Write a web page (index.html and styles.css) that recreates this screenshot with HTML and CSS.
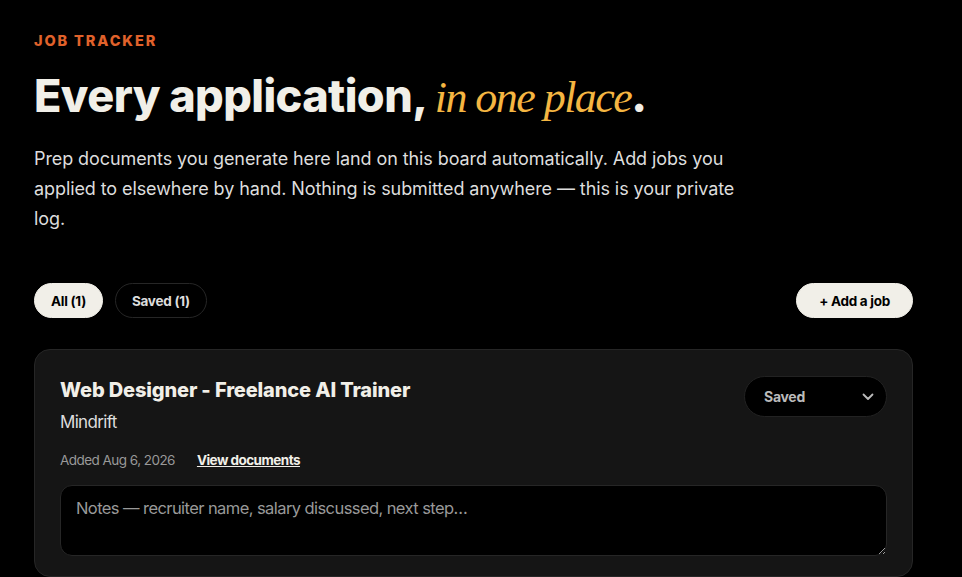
FILE: index.html
```html
<!DOCTYPE html>
<html lang="en">
<head>
  <meta charset="UTF-8">
  <meta name="viewport" content="width=device-width, initial-scale=1.0">
  <title>Job Tracker</title>
  <link rel="stylesheet" href="styles.css">
</head>
<body>

<div class="page">
  <p class="eyebrow">JOB TRACKER</p>
  <h1>Every application, <em>in one place</em>.</h1>
  <p class="intro">Prep documents you generate here land on this board automatically. Add jobs you applied to elsewhere by hand. Nothing is submitted anywhere — this is your private log.</p>

  <div class="toolbar">
    <div class="filters">
      <button class="pill active">All (1)</button>
      <button class="pill">Saved (1)</button>
    </div>
    <button class="add-btn">+ Add a job</button>
  </div>

  <div class="job-card">
    <div class="job-head">
      <div>
        <h2>Web Designer - Freelance AI Trainer</h2>
        <p class="company">Mindrift</p>
      </div>
      <div class="status">
        <span>Saved</span>
        <svg width="12" height="8" viewBox="0 0 12 8"><path d="M1.5 1.5 6 6l4.5-4.5" fill="none" stroke="#bbb" stroke-width="1.8" stroke-linecap="round" stroke-linejoin="round"/></svg>
      </div>
    </div>
    <div class="meta">
      <span class="added">Added Aug 6, 2026</span>
      <a href="#" class="docs">View documents</a>
    </div>
    <textarea class="notes" placeholder="Notes — recruiter name, salary discussed, next step…"></textarea>
  </div>
</div>

</body>
</html>
```

FILE: styles.css
```css
/* Base */
body {
  margin: 0;
  background: #000;
  color: #f1efe8;
  font-family: Inter, "Liberation Sans", sans-serif;
}
.page {
  max-width: 879px;
  padding: 32px 34px;
}
.eyebrow {
  margin: 0;
  color: #e0622b;
  font-size: 14.5px;
  font-weight: 800;
  letter-spacing: 0.13em;
}
h1 {
  margin: 22px 0 0;
  font-size: 45px;
  font-weight: 800;
  line-height: 1.1;
  letter-spacing: -0.013em;
  color: #f1efe8;
}
h1 em {
  font-family: "Liberation Serif", "Times New Roman", serif;
  font-weight: normal;
  font-size: 44px;
  color: #f5b642;
  letter-spacing: -0.035em;
}
.intro {
  margin: 22px 0 0;
  max-width: 715px;
  font-size: 18px;
  line-height: 30px;
  color: #ddd;
  letter-spacing: -0.005em;
}

/* Filtros */
.toolbar {
  display: flex;
  justify-content: space-between;
  align-items: center;
  margin-top: 49px;
}
.filters {
  display: flex;
  gap: 12px;
}
.pill, .add-btn {
  height: 35px;
  padding: 0 16px;
  border-radius: 18px;
  border: 1px solid #262626;
  background: #000;
  color: #ddd;
  font-family: inherit;
  font-size: 13.5px;
  font-weight: bold;
  letter-spacing: -0.02em;
  cursor: pointer;
}
.pill.active, .add-btn {
  background: #f1efe8;
  border-color: #f1efe8;
  color: #000;
}
.add-btn {
  padding: 0 22px;
}

/* Card */
.job-card {
  margin-top: 31px;
  padding: 26px 25px 20px;
  background: #151515;
  border: 1px solid #262626;
  border-radius: 16px;
}
.job-head {
  display: flex;
  justify-content: space-between;
  align-items: flex-start;
}
h2 {
  margin: 2px 0 0;
  font-size: 20px;
  font-weight: 800;
  letter-spacing: -0.007em;
  color: #f1efe8;
}
.company {
  margin: 10px 0 0;
  font-size: 17px;
  color: #ddd;
  letter-spacing: -0.04em;
}
.status {
  display: flex;
  justify-content: space-between;
  align-items: center;
  box-sizing: border-box;
  width: 143px;
  height: 41px;
  padding: 0 12px 0 19px;
  background: #000;
  border: 1px solid #222;
  border-radius: 21px;
  color: #bbb;
  font-size: 14px;
  font-weight: bold;
  letter-spacing: -0.02em;
}
.meta {
  display: flex;
  gap: 22px;
  align-items: baseline;
  margin-top: 20px;
  font-size: 13.5px;
  letter-spacing: -0.04em;
}
.added {
  color: #999;
}
.docs {
  color: #f1efe8;
  font-weight: bold;
}
.notes {
  display: block;
  box-sizing: border-box;
  width: 100%;
  height: 71px;
  margin-top: 17px;
  padding: 12px 15px;
  background: #000;
  border: 1px solid #262626;
  border-radius: 12px;
  color: #ddd;
  font-family: inherit;
  font-size: 16.5px;
  letter-spacing: -0.035em;
}
.notes::placeholder {
  color: #999;
}
```
